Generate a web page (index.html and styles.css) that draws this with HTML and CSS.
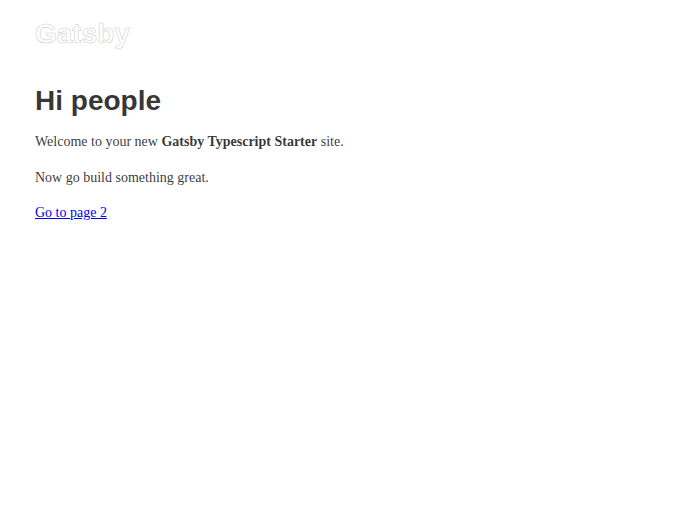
FILE: index.html
```html
<!DOCTYPE html>
<html lang="en">
<head>
<meta charset="utf-8">
<title>Gatsby</title>
<link rel="stylesheet" href="styles.css">
</head>
<body>
<header class="site-header">
  <h1 class="brand"><a class="brand-link" href="#">Gatsby</a></h1>
</header>
<main class="content">
  <h1 class="title">Hi people</h1>
  <p class="para">Welcome to your new <strong>Gatsby Typescript Starter</strong> site.</p>
  <p class="para">Now go build something great.</p>
  <p class="para"><a class="link" href="#">Go to page 2</a></p>
</main>
</body>
</html>
```
FILE: styles.css
```css
html, body {
  margin: 0;
  padding: 0;
  background: #ffffff;
}
body {
  font-family: "Liberation Serif", Georgia, serif;
  font-size: 14px;
  color: hsla(0, 0%, 0%, 0.8);
}
.site-header {
  padding: 18px 35px 0;
}
.brand {
  margin: 0;
  font-family: "Liberation Sans", Arial, sans-serif;
  font-weight: 700;
  font-size: 28px;
  line-height: 32px;
}
.brand-link {
  color: #ffffff;
  text-decoration: none;
  -webkit-text-stroke: 0.6px #d0d0d0;
}
.content {
  padding: 0 35px;
}
.title {
  margin: 33px 0 0;
  font-family: "Liberation Sans", Arial, sans-serif;
  font-weight: 700;
  font-size: 28px;
  line-height: 36px;
  color: hsla(0, 0%, 0%, 0.8);
}
.para {
  margin: 0;
  margin-top: 17.5px;
  line-height: 18px;
}
.title + .para {
  margin-top: 14px;
}
.para strong {
  font-weight: 700;
}
.link {
  color: #0000ee;
}
```
